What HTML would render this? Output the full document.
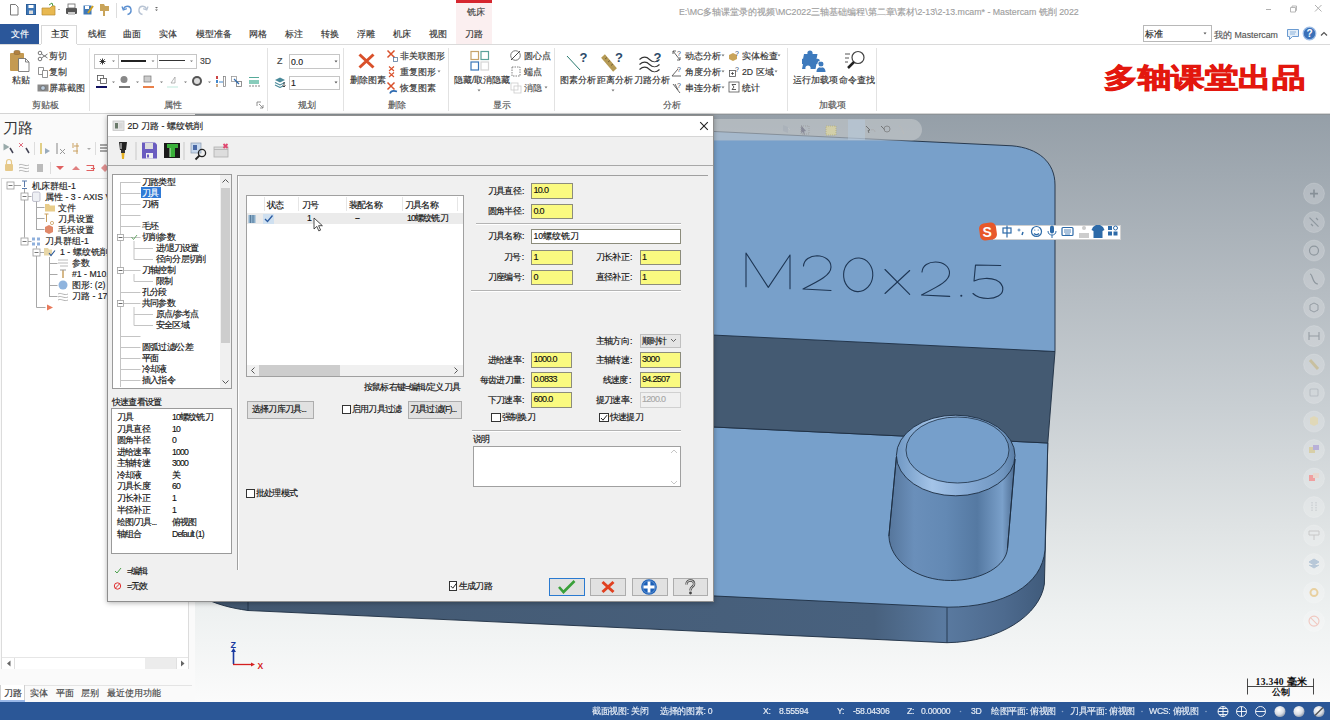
<!DOCTYPE html>
<html><head><meta charset="utf-8">
<style>
*{box-sizing:border-box;margin:0;padding:0}
html,body{width:1330px;height:720px;overflow:hidden;background:#fff;font-family:"Liberation Sans",sans-serif;color:#222}
.a{position:absolute;white-space:nowrap}
.t{position:absolute;white-space:nowrap;font-size:8.7px;line-height:10px;color:#333;-webkit-text-stroke:0.15px currentColor}
#vp{position:absolute;left:193px;top:114px;width:1137px;height:588px;background:linear-gradient(180deg,#959fa8 0%,#b5bcc2 30%,#c9cfd3 50%,#dfe3e4 70%,#eef1f1 85%,#fbfbfb 100%);border-top:1px solid #8d9499}
#status{position:absolute;left:0;top:702px;width:1330px;height:18px;background:#2b5797;color:#fff}
#status .t{color:#e8eef6;top:4px;letter-spacing:-0.3px}
.inp{background:#fafa80;border:1px solid #8c8c7c;font-size:9px;line-height:12.5px;color:#111;padding-left:1.5px;letter-spacing:-0.7px;overflow:hidden;-webkit-text-stroke:0.15px currentColor}
.inp span{position:relative;top:0}
.dlg .t{letter-spacing:-0.8px}
</style></head><body>
<!-- viewport -->
<div id="vp"></div>


<!-- 3D PART -->
<svg class="a" style="left:0;top:0" width="1330" height="720" viewBox="0 0 1330 720">
 <defs>
  <clipPath id="vpc"><rect x="193" y="115" width="1137" height="587"/></clipPath>
  <linearGradient id="cyl" x1="0" y1="0" x2="1" y2="0">
   <stop offset="0" stop-color="#56769c"/><stop offset="0.2" stop-color="#6a8fba"/><stop offset="0.45" stop-color="#6389b4"/><stop offset="0.7" stop-color="#5579a2"/><stop offset="0.9" stop-color="#7aa0ca"/><stop offset="1" stop-color="#4c6b90"/>
  </linearGradient>
  <linearGradient id="cham" x1="0" y1="0" x2="1" y2="0">
   <stop offset="0" stop-color="#7098c4"/><stop offset="0.3" stop-color="#a4c4e8"/><stop offset="0.6" stop-color="#86aad4"/><stop offset="0.9" stop-color="#7096c0"/><stop offset="1" stop-color="#5a7ea6"/>
  </linearGradient>
  <linearGradient id="front" x1="0" y1="0" x2="1" y2="0">
   <stop offset="0" stop-color="#435870"/><stop offset="0.8" stop-color="#48617e"/><stop offset="0.88" stop-color="#5a7aa0"/><stop offset="0.95" stop-color="#4d6a8e"/><stop offset="1" stop-color="#3f5a7a"/>
  </linearGradient>
 </defs>
 <g clip-path="url(#vpc)" stroke="#1d2e42" stroke-width="0.9" stroke-linejoin="round">
  <!-- front face -->
  <path d="M180 540 L1047.8 443 L1044.4 584 C1040 615 1000 642 947 642.7 L248 610.5 C230 608 215 604 200 596 Z" fill="url(#front)"/>
  <path d="M947 607 V642.7" fill="none" stroke-width="0.8"/>
  <path d="M248 574 V610.5" fill="none" stroke-width="0.8"/>
  <!-- lower face -->
  <path d="M150 400 L1047.8 443 L1045 550 C1042 585 1005 607 948 607.2 L248 573.6 C230 572 200 565 180 550 Z" fill="#77a0cb"/>
  <!-- dark step face -->
  <path d="M150 300 L1055 351.5 L1047.8 443 L150 400 Z" fill="#445a72"/>
  <!-- top face -->
  <path d="M150 104.4 L1012 145.8 C1038 148 1055 162 1055 185 L1055 351.5 L150 308 Z" fill="#78a0ca"/>
  <!-- cylinder -->
  <path d="M896.4 457 L888.9 536 C890 562 918 580.5 950.5 580.5 C982 580.5 1006 566 1007.5 548.6 L1015 459 Z" fill="url(#cyl)"/>
  <ellipse cx="955.7" cy="455.5" rx="59.3" ry="40.3" fill="url(#cham)"/>
  <ellipse cx="957.5" cy="450" rx="51.5" ry="33" fill="#769fcb" stroke-width="0.8"/>
  <path d="M896.4 457 L888.9 536 M1015 459 L1007.5 548.6" fill="none"/>
  <!-- M20x2.5 -->
  <g fill="none" stroke="#1e3654" stroke-width="1.1" stroke-linecap="round">
   <path d="M746 286.7 L746 253 L768.3 287.4 L790 255 L790 288.8"/>
   <path d="M803.5 266 C804 259.5 810 255.8 817 255.8 C825 256 831 260.5 831 267 C831 275 820 280.5 803 289 L831 290.5"/>
   <ellipse cx="858.2" cy="274.8" rx="14.6" ry="16.8" transform="rotate(3 858.2 274.8)"/>
   <path d="M885 269.5 L909.7 294.3 M909.7 270.5 L885 293.5"/>
   <path d="M922 272 C922.5 265.5 928.5 262 935.5 262 C943.5 262 949.5 266.5 949.5 273 C949.5 281 939 286 921.5 295 L949.7 296.4"/>
   <circle cx="961.3" cy="295.8" r="0.5"/>
   <path d="M1000.7 265.5 L975.5 265 L974 281 C980 278 990 277.5 996 280 C1001 282.5 1003 286 1002.8 289.5 C1002.5 295 996 298.5 988 298.5 C981 298.5 976 296.5 973 293.5"/>
  </g>
 </g>
 <!-- viewport top toolbar (translucent) -->
 <rect x="195" y="119" width="727" height="21.5" rx="10.7" fill="#c4c9cd" fill-opacity="0.6"/>
 <rect x="848" y="119.5" width="17" height="20.5" fill="#b8cce0" fill-opacity="0.5"/>
 <g fill="none" stroke-width="1" opacity="0.7">
  <path d="M787 127l3 3M804 126v6" stroke="#c0c4c8"/>
  <path d="M783 125l5 2v6l-5-2z" fill="#a8b0b8" stroke="none"/>
  <path d="M801 125l5 6-2 .5 1 3-1 .5-1-3-2 1z" fill="#778" stroke="none"/>
  <rect x="801" y="126" width="8" height="8" stroke="#999" stroke-dasharray="1 1"/>
  <rect x="826" y="126" width="10" height="9" fill="#e0d8a0" stroke="#b8b070" stroke-dasharray="1 1"/>
  <path d="M866 126l4 4-2 .5 1 2.5" stroke="#555"/><path d="M871 130c2-1 4 0 4 2" stroke="#aaa"/>
  <path d="M881 126l4 4" stroke="#555"/><circle cx="887" cy="129" r="3" stroke="#777"/>
  <path d="M899 126c2 0 3 2 3 4l2 4" stroke="#bbb"/>
 </g>
 <!-- right circles -->
 <g fill="#ffffff" fill-opacity="0.2" stroke="#ffffff" stroke-opacity="0.15" stroke-width="1"><circle cx="1314" cy="193.6" r="10.5"/><circle cx="1314" cy="222.1" r="10.5"/><circle cx="1314" cy="250.6" r="10.5"/><circle cx="1314" cy="279.1" r="10.5"/><circle cx="1314" cy="307.6" r="10.5"/><circle cx="1314" cy="336.1" r="10.5"/><circle cx="1314" cy="364.6" r="10.5"/><circle cx="1314" cy="393.1" r="10.5"/><circle cx="1314" cy="421.6" r="10.5"/><circle cx="1314" cy="450.1" r="10.5"/><circle cx="1314" cy="478.6" r="10.5"/><circle cx="1314" cy="507.1" r="10.5"/><circle cx="1314" cy="535.6" r="10.5"/><circle cx="1314" cy="564.1" r="10.5"/><circle cx="1314" cy="592.6" r="10.5"/><circle cx="1314" cy="621.1" r="10.5"/></g>
 <path d="M1310 193.6h8M1314 189.6v8" stroke="#868f97" stroke-width="1.6"/>
 <path d="M1309.5 217.6l9 9M1311 224l2 2M1316 218l2 2" stroke="#8e979e" stroke-width="1.2"/>
 <circle cx="1314" cy="250.6" r="4.5" fill="none" stroke="#8e979e" stroke-width="1.2"/>
 <path d="M1310 274c3 0 2 10 8 10" fill="none" stroke="#8e979e" stroke-width="1.2"/>
 <path d="M1310 305l4-2 4 2v5l-4 2-4-2z" fill="none" stroke="#959da4" stroke-width="1"/>
 <path d="M1309 332v8M1319 332v8M1309 336h10" stroke="#959da4" stroke-width="1.1"/>
 <path d="M1310 360l8 9" stroke="#c8c0a0" stroke-width="3"/>
 <rect x="1310" y="389" width="8" height="7" rx="1" fill="none" stroke="#b8bec4" stroke-width="1.1"/>
 <path d="M1310 418l4-2 4 2v6l-4 2-4-2z" fill="#e0d8b8"/>
 <rect x="1309" y="447" width="6" height="6" fill="#d8cfa8"/><rect x="1313" y="445" width="6" height="5" fill="#b8b0d8"/>
 <rect x="1309" y="475" width="6" height="6" fill="#f0a0a0"/><rect x="1313" y="473" width="6" height="5" fill="#e8d8d0"/>
 <path d="M1312 502v10M1316 502v10" stroke="#c4c8cc" stroke-width="1" stroke-dasharray="1.5 1"/>
 <path d="M1309 531h10v4h-10zM1314 535v5" fill="none" stroke="#c8c8c8" stroke-width="1"/>
 <path d="M1309 562l5-3 5 3-5 3zM1309 565l5 3 5-3" fill="#b8c8d8" stroke="#b8c8d8" stroke-width="1"/>
 <circle cx="1314" cy="592.6" r="3.5" fill="none" stroke="#e8d0a0" stroke-width="2"/>
 <circle cx="1314" cy="621.1" r="5" fill="none" stroke="#f0c8c0" stroke-width="1.1"/><path d="M1310.5 617.6l7 7" stroke="#f0c8c0" stroke-width="1.1"/>
 <!-- axis -->
 <path d="M233.5 664 V650" stroke="#1a3aa0" stroke-width="1.6"/><path d="M231 652l2.5-4 2.5 4z" fill="#1a3aa0"/>
 <path d="M233 664.5 H252" stroke="#d42020" stroke-width="1.3"/><path d="M251 662.5l4 2-4 2z" fill="#d42020"/>
 <text x="230.5" y="648" font-size="9" font-weight="bold" fill="#1a3aa0" font-family="Liberation Sans">Z</text>
 <text x="257.5" y="669" font-size="8.5" font-weight="bold" fill="#d42020" font-family="Liberation Sans">X</text>
 <!-- scale bar -->
 <path d="M1247.5 678.5 V694.5 M1313.5 678.5 V694.5 M1247.5 686.5 H1313.5" stroke="#333" stroke-width="0.9"/>
</svg>
<div class="a" style="left:1255.5px;top:676.5px;font-family:'Liberation Serif',serif;font-size:9.6px;line-height:10px;font-weight:bold;color:#111;letter-spacing:0.35px">13.340 毫米</div>
<div class="a" style="left:1272px;top:687px;font-family:'Liberation Serif',serif;font-size:8.5px;line-height:10px;font-weight:bold;color:#111">公制</div>
<!-- IME bar -->
<div class="a" style="left:993px;top:225px;width:128px;height:15px;background:#fff;border:1px solid #d0d0d0"></div>
<svg class="a" style="left:978px;top:222px" width="145" height="20">
 <rect x="1.5" y="1" width="17" height="17" rx="5" fill="#e8582a" transform="rotate(-8 10 9.5)"/>
 <text x="4.5" y="15" font-size="14" font-weight="bold" fill="#fff" font-family="Liberation Sans">S</text>
 <g fill="none" stroke="#2d6aa8" stroke-width="1.2">
  <rect x="25" y="6" width="8" height="5"/><path d="M29 3.5v12"/>
  <circle cx="58.5" cy="9.5" r="5"/><path d="M56 11.5c1.5 1.5 3.5 1.5 5 0"/>
   </g>
 <circle cx="41" cy="8" r="1" fill="none" stroke="#2d6aa8" stroke-width="0.8"/><path d="M45 10l-1 3" stroke="#2d6aa8" stroke-width="1.5"/>
 <circle cx="56.8" cy="8" r="0.6" fill="#2d6aa8"/><circle cx="60.2" cy="8" r="0.6" fill="#2d6aa8"/>
 <rect x="72" y="3.5" width="4" height="8" rx="2" fill="#2d6aa8"/><path d="M70 9c0 3 2 4 4 4s4-1 4-4M74 13v3" fill="none" stroke="#2d6aa8" stroke-width="1"/>
 <rect x="84" y="5.5" width="11" height="8" rx="1" fill="none" stroke="#2d6aa8" stroke-width="1.2"/><path d="M86 8h7M86 10h7M87 12h5" stroke="#2d6aa8" stroke-width="0.8"/>
 <circle cx="106" cy="6" r="2" fill="#ccc"/><path d="M101 16v-5h10v5z" fill="#ccc"/>
 <path d="M115 5l3-2h4l3 2 1.5 3-2 1v7h-9v-7l-2-1z" fill="#2d6aa8"/>
 <rect x="130" y="4" width="4" height="4" fill="#2d6aa8"/><rect x="130" y="9.5" width="4" height="4" fill="#2d6aa8"/><rect x="135.5" y="9.5" width="4" height="4" fill="#2d6aa8"/><circle cx="137.5" cy="6" r="2" fill="none" stroke="#2d6aa8" stroke-width="1"/>
</svg>

<!-- title / QAT -->
<div class="a" style="left:0;top:0;width:1330px;height:45px;background:#fff"></div>
<div class="a" style="left:456px;top:0;width:36px;height:44px;background:#fbeff0"></div>
<div class="a" style="left:456px;top:0;width:36px;height:3px;background:#d6262f"></div>
<div class="t" style="left:467px;top:7px;color:#444">铣床</div>
<div class="t" style="left:679px;top:7px;color:#a0a0a0;font-size:8.8px">E:\MC多轴课堂录的视频\MC2022三轴基础编程\第二章\素材\2-13\2-13.mcam* - Mastercam 铣削 2022</div>

<!-- tabs -->
<div class="a" style="left:0;top:24px;width:39px;height:20px;background:#2b579a"></div>
<div class="t" style="left:11px;top:29px;color:#fff">文件</div>
<div class="a" style="left:41px;top:25px;width:36px;height:21px;border:1px solid #d8d8d8;border-bottom:none;background:#fff"></div>
<div class="a" style="left:0;top:44px;width:1330px;height:1px;background:#dadada"></div>
<div class="a" style="left:41px;top:44px;width:36px;height:1px;background:#fff"></div>
<div class="t" style="left:51px;top:29px;color:#222">主页</div>
<div class="t" style="left:88px;top:29px">线框</div>
<div class="t" style="left:123px;top:29px">曲面</div>
<div class="t" style="left:159px;top:29px">实体</div>
<div class="t" style="left:196px;top:29px">模型准备</div>
<div class="t" style="left:249px;top:29px">网格</div>
<div class="t" style="left:285px;top:29px">标注</div>
<div class="t" style="left:321px;top:29px">转换</div>
<div class="t" style="left:357px;top:29px">浮雕</div>
<div class="t" style="left:393px;top:29px">机床</div>
<div class="t" style="left:429px;top:29px">视图</div>
<div class="t" style="left:465px;top:29px">刀路</div>

<!-- ribbon body -->
<div class="a" style="left:0;top:45px;width:1330px;height:69px;background:#fff;border-bottom:1px solid #d4d4d4"></div>


<!-- QAT icons -->
<svg class="a" style="left:0;top:0" width="180" height="22" viewBox="0 0 180 22">
 <path d="M10.5 4.5h5l2.5 2.5v8h-7.5z" fill="#fff" stroke="#6a6a6a" stroke-width="0.9"/>
 <rect x="26.5" y="4.5" width="9" height="10" fill="#3f78b8" stroke="#2d5f99"/><rect x="28.5" y="5" width="5" height="3" fill="#fff"/><rect x="29" y="10.5" width="4" height="3.5" fill="#ddd"/>
 <path d="M42 8h8l2-2h3v9h-13z" fill="#e8b850" stroke="#b8892e" stroke-width="0.7"/><path d="M49 5l3-2 1 3" stroke="#4a9a40" fill="none"/>
 <path d="M58 9l1 1 1-1z" fill="#555"/>
 <rect x="66" y="8" width="11" height="6" rx="1" fill="#555"/><rect x="68" y="4" width="7" height="4" fill="#fff" stroke="#666" stroke-width="0.8"/><rect x="68" y="12" width="7" height="3" fill="#ccc"/>
 <rect x="83.5" y="5.5" width="8" height="9" fill="#3f78b8"/><rect x="85" y="6" width="4" height="3" fill="#fff"/><path d="M88 13l5-7" stroke="#d0a020" stroke-width="2"/>
 <path d="M100 4h4l1 2h4v5h-4v5h-2v-5h-3z" fill="#c9a45a"/>
 <rect x="116" y="3" width="1" height="15" fill="#ddd"/>
 <path d="M123.5 9c1.5-3.5 7-4 7.5 0.5c0.3 2.5-1.5 4.5-3.5 5" fill="none" stroke="#5b8fd0" stroke-width="1.4"/><path d="M122 6.5l1.3 3.5 3.5-1.3" fill="none" stroke="#5b8fd0" stroke-width="1.3"/>
 <path d="M146.5 9c-1.5-3.5-7-4-7.5 0.5c-0.3 2.5 1.5 4.5 3.5 5" fill="none" stroke="#b8c4d4" stroke-width="1.4"/><path d="M148 6.5l-1.3 3.5-3.5-1.3" fill="none" stroke="#b8c4d4" stroke-width="1.3"/>
 <path d="M155 7h3l-1.5 1.5z M155 9.5h3l-1.5 1.5z" fill="#666"/>
</svg>
<!-- window controls -->
<div class="a" style="left:1266px;top:9px;width:5px;height:1px;background:#b0b0b0"></div>
<svg class="a" style="left:1288px;top:4px" width="10" height="10"><path d="M2.5 3.5h5v4.5h-5z M4 3.5v-1.5h4.5v4.5h-1" fill="none" stroke="#b0b0b0" stroke-width="0.9"/></svg>
<svg class="a" style="left:1313px;top:3px" width="11" height="11"><path d="M2 2l6.5 6.5M8.5 2l-6.5 6.5" stroke="#b0b0b0" stroke-width="1"/></svg>
<!-- right of tab bar -->
<div class="a" style="left:1143px;top:25px;width:69px;height:17px;border:1px solid #b8b8b8;background:#fff"></div>
<div class="t" style="left:1145px;top:29px;color:#222">标准</div>
<svg class="a" style="left:1203px;top:32px" width="5" height="4"><path d="M0.5 0.5h3l-1.5 2z" fill="#555"/></svg>
<div class="t" style="left:1214px;top:30px;color:#555;font-size:8.8px">我的 Mastercam</div>
<svg class="a" style="left:1286px;top:27px" width="14" height="14"><path d="M1.5 2.5h11v7h-6l-3 3v-3h-2z" fill="#e4eef8" stroke="#6b9bd1" stroke-width="1"/><path d="M4 5h6M4 7h5" stroke="#6b9bd1" stroke-width="0.7"/></svg>
<svg class="a" style="left:1302px;top:26px" width="15" height="15"><circle cx="7.5" cy="7.5" r="6.3" fill="#3a70b8" stroke="#9bbce6" stroke-width="1.2"/><text x="7.5" y="11.2" font-size="10" font-weight="bold" fill="#fff" text-anchor="middle" font-family="Liberation Sans">?</text></svg>
<svg class="a" style="left:1320px;top:31px" width="8" height="6"><path d="M1 4.5l3-3 3 3" fill="none" stroke="#555" stroke-width="1.2"/></svg>

<!-- group dividers -->
<div class="a" style="left:89px;top:48px;width:1px;height:63px;background:#e2e2e2"></div>
<div class="a" style="left:267px;top:48px;width:1px;height:63px;background:#e2e2e2"></div>
<div class="a" style="left:343px;top:48px;width:1px;height:63px;background:#e2e2e2"></div>
<div class="a" style="left:448px;top:48px;width:1px;height:63px;background:#e2e2e2"></div>
<div class="a" style="left:554px;top:48px;width:1px;height:63px;background:#e2e2e2"></div>
<div class="a" style="left:787px;top:48px;width:1px;height:63px;background:#e2e2e2"></div>
<div class="a" style="left:876px;top:48px;width:1px;height:63px;background:#e2e2e2"></div>
<!-- group labels -->
<div class="t" style="left:32px;top:100px;color:#555">剪贴板</div>
<div class="t" style="left:164px;top:100px;color:#555">属性</div>
<div class="t" style="left:298px;top:100px;color:#555">规划</div>
<div class="t" style="left:388px;top:100px;color:#555">删除</div>
<div class="t" style="left:493px;top:100px;color:#555">显示</div>
<div class="t" style="left:663px;top:100px;color:#555">分析</div>
<div class="t" style="left:819px;top:100px;color:#555">加载项</div>
<svg class="a" style="left:256px;top:101px" width="8" height="8"><path d="M1 1h4M1 1v4M3 3l4 4M7 4v3h-3" fill="none" stroke="#777" stroke-width="0.8"/></svg>

<!-- 剪贴板 -->
<svg class="a" style="left:8px;top:48px" width="26" height="28">
 <rect x="2" y="5" width="14" height="18" rx="1" fill="#c49a52"/>
 <rect x="6" y="2.5" width="6" height="4" rx="1.5" fill="#b08040" stroke="#8a6a3a" stroke-width="0.6"/>
 <path d="M10.5 10.5h7l3.5 3.5v9.5h-10.5z" fill="#fff" stroke="#666" stroke-width="0.8"/>
 <path d="M17.5 10.5v3.5h3.5" fill="none" stroke="#666" stroke-width="0.8"/>
</svg>
<div class="t" style="left:12px;top:75px">粘贴</div>
<svg class="a" style="left:37px;top:50px" width="12" height="12"><circle cx="3" cy="3" r="1.8" fill="none" stroke="#666" stroke-width="0.9"/><circle cx="3" cy="9" r="1.8" fill="none" stroke="#666" stroke-width="0.9"/><path d="M4.5 4l6 4M4.5 8l6-4" stroke="#666" stroke-width="0.9"/></svg>
<div class="t" style="left:49px;top:51px">剪切</div>
<svg class="a" style="left:37px;top:66px" width="12" height="12"><path d="M1.5 1.5h5v7h-5z" fill="#fff" stroke="#777" stroke-width="0.8"/><path d="M5.5 4.5h5v7h-5z" fill="#fff" stroke="#777" stroke-width="0.8"/></svg>
<div class="t" style="left:49px;top:67px">复制</div>
<svg class="a" style="left:37px;top:83px" width="12" height="10"><rect x="0.5" y="1.5" width="11" height="7" fill="#8a8a8a"/><circle cx="6" cy="5" r="2.3" fill="#bcd" stroke="#555" stroke-width="0.6"/></svg>
<div class="t" style="left:49px;top:83px">屏幕截图</div>

<!-- 属性 -->
<div class="a" style="left:94px;top:54px;width:103px;height:15px;border:1px solid #c6c6c6;background:#fff"></div>
<div class="a" style="left:118px;top:55px;width:1px;height:13px;background:#c6c6c6"></div>
<div class="a" style="left:157px;top:55px;width:1px;height:13px;background:#c6c6c6"></div>
<svg class="a" style="left:94px;top:54px" width="103" height="15">
 <path d="M5.5 7.5h6M8.5 4.5v6M6.3 5.3l4.4 4.4M10.7 5.3l-4.4 4.4" stroke="#222" stroke-width="0.9"/>
 <path d="M18 6.5h3l-1.5 1.5z M57.5 6.5h3l-1.5 1.5z M96 6.5h3l-1.5 1.5z" fill="#777"/>
 <rect x="27" y="6" width="25" height="2" fill="#222"/>
 <rect x="65" y="6" width="26" height="1" fill="#333"/>
</svg>
<div class="t" style="left:200px;top:56px;color:#444">3D</div>
<svg class="a" style="left:95px;top:74px" width="170" height="16">
 <rect x="2.5" y="1.5" width="6" height="5" fill="#fff" stroke="#555" stroke-width="0.8"/><rect x="5.5" y="4.5" width="6" height="5" fill="#fff" stroke="#555" stroke-width="0.8"/>
 <rect x="1" y="12" width="11" height="2" fill="#101060"/>
 <path d="M17 7.5h3l-1.5 1.5z M41 7.5h3l-1.5 1.5z M65 7.5h3l-1.5 1.5z M89 7.5h3l-1.5 1.5z M113 7.5h3l-1.5 1.5z" fill="#777"/>
 <circle cx="29" cy="5.5" r="3.5" fill="#888"/><rect x="24" y="12" width="11" height="2" fill="#777"/>
 <rect x="49" y="2" width="7" height="6" fill="#ccc" stroke="#777" stroke-width="0.7"/><rect x="48" y="12" width="11" height="2" fill="#e9804a"/>
 <path d="M76 9l4-6v6z" fill="none" stroke="#999" stroke-width="0.7"/><rect x="72" y="12" width="11" height="2" fill="#dff4ee"/>
 <circle cx="102" cy="7" r="5" fill="#555"/><circle cx="102" cy="7" r="3" fill="#ddd"/>
 <rect x="121" y="2" width="2" height="3" fill="#c44"/><rect x="121" y="6" width="2" height="3" fill="#48c"/><rect x="121" y="10" width="2" height="3" fill="#ca8"/>
 <path d="M124 8h4" stroke="#48c" stroke-width="1"/><rect x="128.5" y="2.5" width="2" height="10" fill="none" stroke="#777" stroke-width="0.7"/>
 <rect x="136.5" y="2.5" width="5" height="5" fill="none" stroke="#999" stroke-width="0.8"/><rect x="141.5" y="7.5" width="5" height="5" fill="none" stroke="#777" stroke-width="0.8"/><path d="M139 5l5 5" stroke="#2d6ab0" stroke-width="1.2"/>
 <rect x="154" y="3" width="10" height="1" fill="#5a9"/><rect x="154" y="6" width="10" height="4" fill="#8cb"/><path d="M155 11v2M158 11v2M161 11v2M164 11v2" stroke="#666" stroke-width="0.8"/>
</svg>

<!-- 规划 -->
<div class="t" style="left:277px;top:56px;color:#444;font-size:9px">Z</div>
<div class="a" style="left:289px;top:54px;width:51px;height:15px;border:1px solid #c6c6c6;background:#fff"></div>
<div class="t" style="left:291px;top:57px;color:#222">0.0</div>
<div class="a" style="left:289px;top:76px;width:51px;height:14px;border:1px solid #c6c6c6;background:#fff"></div>
<div class="t" style="left:291px;top:78px;color:#222">1</div>
<svg class="a" style="left:334px;top:60px" width="5" height="4"><path d="M0.5 0.5h3l-1.5 2z" fill="#555"/></svg>
<svg class="a" style="left:334px;top:81px" width="5" height="4"><path d="M0.5 0.5h3l-1.5 2z" fill="#555"/></svg>
<svg class="a" style="left:274px;top:76px" width="12" height="12"><path d="M1 4l5-2.5 5 2.5-5 2.5z" fill="#4a8a9a"/><path d="M1 6.5l5 2.5 5-2.5M1 9l5 2.5 3-1.5" fill="none" stroke="#4a8a9a" stroke-width="1.1"/><path d="M10 6v5M8.5 9.5l1.5 1.5 1.5-1.5" stroke="#333" stroke-width="0.9" fill="none"/></svg>

<!-- 删除 -->
<svg class="a" style="left:357px;top:52px" width="19" height="18"><path d="M2.5 2.5l14 13M16.5 2.5l-14 13" stroke="#d9502a" stroke-width="3"/></svg>
<div class="t" style="left:350px;top:75px">删除图素</div>
<svg class="a" style="left:386px;top:49px" width="14" height="14"><path d="M1.5 1.5l7 7M8.5 1.5l-7 7" stroke="#d9502a" stroke-width="1.5"/><rect x="7.5" y="8.5" width="4" height="4" fill="none" stroke="#5a7aa0" stroke-width="0.8"/></svg>
<div class="t" style="left:400px;top:51px">非关联图形</div>
<svg class="a" style="left:387px;top:65px" width="12" height="14"><path d="M2 1.5l5 4.5M7 1.5l-5 4.5M2 7.5l5 4.5M7 7.5l-5 4.5" stroke="#d9502a" stroke-width="1.1"/></svg>
<div class="t" style="left:400px;top:67px">重复图形</div>
<svg class="a" style="left:437px;top:70px" width="5" height="4"><path d="M0.5 0.5h3l-1.5 2z" fill="#777"/></svg>
<svg class="a" style="left:386px;top:81px" width="14" height="14"><path d="M1.5 1.5l7 7M8.5 1.5l-7 7" stroke="#d9502a" stroke-width="1.5"/><path d="M4 12.5c1-3 4-3 7-2" fill="none" stroke="#2d6ab0" stroke-width="1.6"/></svg>
<div class="t" style="left:400px;top:83px">恢复图素</div>

<!-- 显示 -->
<svg class="a" style="left:469px;top:50px" width="22" height="22">
 <rect x="2" y="1.5" width="7.5" height="8" fill="none" stroke="#c6a36a" stroke-width="1.2"/>
 <rect x="12" y="1.5" width="7.5" height="8" fill="none" stroke="#5aa19a" stroke-width="1.2"/>
 <rect x="2" y="12" width="7.5" height="8" fill="none" stroke="#3a76b8" stroke-width="1.2"/>
 <rect x="12" y="12" width="7.5" height="8" fill="none" stroke="#d6d6d6" stroke-width="1.2"/>
</svg>
<div class="t" style="left:454px;top:75px">隐藏/取消隐藏</div>
<svg class="a" style="left:477px;top:89px" width="5" height="4"><path d="M0.5 0.5h3l-1.5 2z" fill="#777"/></svg>
<svg class="a" style="left:509px;top:49px" width="13" height="13"><circle cx="6.5" cy="6.5" r="4.8" fill="none" stroke="#666" stroke-width="0.9"/><path d="M2 11l9-9" stroke="#333" stroke-width="0.9"/></svg>
<div class="t" style="left:524px;top:51px">圆心点</div>
<svg class="a" style="left:511px;top:66px" width="10" height="11"><rect x="1" y="1" width="8" height="9" fill="none" stroke="#777" stroke-width="0.9" stroke-dasharray="1.5 1"/></svg>
<div class="t" style="left:524px;top:67px">端点</div>
<svg class="a" style="left:510px;top:82px" width="12" height="12"><rect x="1" y="1" width="7" height="7" fill="none" stroke="#ccc" stroke-width="0.8"/><rect x="4" y="4" width="7" height="7" fill="none" stroke="#ccc" stroke-width="0.8"/></svg>
<div class="t" style="left:524px;top:83px;color:#555">消隐</div>
<svg class="a" style="left:544px;top:86px" width="5" height="4"><path d="M0.5 0.5h3l-1.5 2z" fill="#777"/></svg>

<!-- 分析 -->
<svg class="a" style="left:565px;top:50px" width="24" height="22"><path d="M2 6l13 14" stroke="#2a7a70" stroke-width="1"/><text x="14.5" y="12" font-size="13" font-weight="bold" fill="#2d4a6a" font-family="Liberation Sans">?</text></svg>
<div class="t" style="left:560px;top:75px">图素分析</div>
<svg class="a" style="left:600px;top:50px" width="26" height="22"><path d="M3 6l12 14" stroke="#b59a55" stroke-width="5"/><path d="M5 9l2-1.5M8 12l2-1.5M11 15.5l2-1.5" stroke="#6a5530" stroke-width="0.8"/><text x="15" y="12" font-size="13" font-weight="bold" fill="#2d4a6a" font-family="Liberation Sans">?</text></svg>
<div class="t" style="left:597px;top:75px">距离分析</div>
<svg class="a" style="left:611px;top:89px" width="5" height="4"><path d="M0.5 0.5h3l-1.5 2z" fill="#777"/></svg>
<svg class="a" style="left:638px;top:50px" width="26" height="24"><path d="M1.5 9.5c3.5-3 7-3 10 0s7 3 10 0M1.5 14.5c3.5-3 7-3 10 0s7 3 10 0M1.5 19.5c3.5-3 7-3 10 0s7 3 10 0" fill="none" stroke="#333" stroke-width="1.1"/><text x="15.5" y="11.5" font-size="13" font-weight="bold" fill="#2d4a6a" font-family="Liberation Sans">?</text></svg>
<div class="t" style="left:634px;top:75px">刀路分析</div>
<svg class="a" style="left:671px;top:49px" width="12" height="13"><path d="M2 2l7 9" stroke="#555" stroke-width="0.9"/><path d="M2 2h3M2 2v3M9 11h-3M9 11v-3" stroke="#555" stroke-width="0.9"/><text x="6" y="7" font-size="7" fill="#2d4a6a" font-family="Liberation Sans">?</text></svg>
<div class="t" style="left:685px;top:51px">动态分析</div>
<svg class="a" style="left:671px;top:65px" width="12" height="13"><path d="M1 11h9M1 11l6-7" fill="none" stroke="#555" stroke-width="0.9"/><text x="6" y="7" font-size="7" fill="#2d4a6a" font-family="Liberation Sans">?</text></svg>
<div class="t" style="left:685px;top:67px">角度分析</div>
<svg class="a" style="left:671px;top:81px" width="12" height="13"><path d="M2 3l7 9M4 3l3 6" fill="none" stroke="#555" stroke-width="0.9"/><text x="6" y="7" font-size="7" fill="#2d4a6a" font-family="Liberation Sans">?</text></svg>
<div class="t" style="left:685px;top:83px">串连分析</div>
<svg class="a" style="left:721px;top:54px" width="5" height="36"><path d="M0.5 0.5h3l-1.5 2z M0.5 16.5h3l-1.5 2z M0.5 32.5h3l-1.5 2z" fill="#777"/></svg>
<svg class="a" style="left:728px;top:49px" width="13" height="13"><path d="M1 6l4-2 4 2v4l-4 2-4-2z" fill="#c9a45a"/><text x="7" y="7" font-size="7" fill="#2d4a6a" font-family="Liberation Sans">?</text></svg>
<div class="t" style="left:742px;top:51px">实体检查</div>
<svg class="a" style="left:728px;top:65px" width="13" height="13"><rect x="1.5" y="5.5" width="6" height="6" fill="none" stroke="#555" stroke-width="0.8"/><path d="M4.5 7v3M3 8.5h3" stroke="#333" stroke-width="0.7"/><text x="7" y="7" font-size="7" fill="#2d4a6a" font-family="Liberation Sans">?</text></svg>
<div class="t" style="left:742px;top:67px">2D 区域</div>
<svg class="a" style="left:728px;top:81px" width="12" height="12"><rect x="1" y="1" width="10" height="10" fill="none" stroke="#555" stroke-width="0.8"/><path d="M8 3.5h-4l2 2.5-2 2.5h4" fill="none" stroke="#333" stroke-width="0.8"/></svg>
<div class="t" style="left:742px;top:83px">统计</div>
<svg class="a" style="left:777px;top:54px" width="5" height="4"><path d="M0.5 0.5h3l-1.5 2z" fill="#777"/></svg>
<svg class="a" style="left:774px;top:70px" width="5" height="4"><path d="M0.5 0.5h3l-1.5 2z" fill="#777"/></svg>

<!-- 加载项 -->
<svg class="a" style="left:802px;top:49px" width="24" height="24"><g fill="#3d7abd"><path d="M8 1.5c2 0 3 1.5 2.5 3.5h5l-1 5c2-0.5 3.5 0.5 3.5 2.5s-1.5 3-3.5 2.5l-1 5h-5c0.5-2-0.5-3.5-2.5-3.5s-3 1.5-2.5 3.5h-3.5l1-5c-2 0.5-3-0.5-3-2.5s1-3 3-2.5l1-5h3.5c-0.5-2 0.5-3.5 2.5-3.5z"/><circle cx="19" cy="15" r="2.6"/><path d="M14.5 23c0-3.5 2-5 4.5-5s4.5 1.5 4.5 5z"/></g><circle cx="19" cy="15" r="3.3" fill="none" stroke="#fff" stroke-width="0.9"/></svg>
<div class="t" style="left:793px;top:75px">运行加载项</div>
<svg class="a" style="left:843px;top:49px" width="24" height="24"><circle cx="15" cy="8.5" r="6" fill="none" stroke="#444" stroke-width="1.2"/><path d="M11 13l-6 6" stroke="#222" stroke-width="2.5"/><path d="M2 5h5M2 9h4M2 13h3" stroke="#555" stroke-width="1"/></svg>
<div class="t" style="left:839px;top:75px">命令查找</div>

<!-- watermark -->
<div class="a" style="left:1104px;top:58px;font-size:29px;line-height:36px;font-weight:900;color:#e3170e;-webkit-text-stroke:1px #e3170e;letter-spacing:0.2px;transform-origin:0 100%;transform:scale(1.15,0.93)">多轴课堂出品</div>


<!-- LEFT PANEL -->
<div class="a" style="left:0;top:114px;width:195px;height:588px;background:#fafafa"></div>
<div class="a" style="left:3px;top:119px;font-size:15px;line-height:18px;color:#333">刀路</div>
<svg class="a" style="left:0;top:140px" width="110" height="36">
 <path d="M3.5 3.5l6 3.5-6 3.5z" fill="#9aa"/><path d="M10 8l3 5" stroke="#445" stroke-width="1.5"/>
 <path d="M19 3l4 4M23 3l-4 4" stroke="#e07080" stroke-width="1"/><path d="M26 8l3 5" stroke="#445" stroke-width="1.5"/>
 <rect x="34" y="2" width="1" height="13" fill="#ddd"/>
 <path d="M41 3v11" stroke="#d9c060" stroke-width="1.5"/><path d="M45 8l5 3-5 3z" fill="#9ab"/>
 <path d="M57 3v11" stroke="#999" stroke-width="1.2"/><path d="M60 9l5 5M65 9l-5 5" stroke="#999" stroke-width="1"/>
 <path d="M73 3v5M77 3v11M73 11h5M74 6h5" stroke="#c9a060" stroke-width="1"/>
 <path d="M87 8l2 2 2-2z" fill="#aaa"/>
 <rect x="95" y="2" width="1" height="13" fill="#ddd"/>
 <path d="M100 5h10M100 8h10M100 11h10" stroke="#888" stroke-width="1.3"/>
 <rect x="5" y="24" width="8" height="7" rx="1" fill="#e6c98a"/><path d="M6.5 24v-2a2.5 2.5 0 0 1 5 0v2" fill="none" stroke="#e6c98a" stroke-width="1.2"/>
 <path d="M19 25c3-2 6 2 10 0M19 28c3-2 6 2 10 0M19 31c3-2 6 2 10 0" fill="none" stroke="#aaa" stroke-width="0.9"/>
 <path d="M37 24h6v8h-6z" fill="#bbb"/>
 <rect x="50" y="22" width="1" height="12" fill="#ddd"/>
 <path d="M56 26h8l-4 4z" fill="#e06060"/><path d="M72 30h8l-4-4z" fill="#e08080"/>
 <path d="M86.5 25.5h7v5h-7M91 28.5h4" fill="none" stroke="#e06060" stroke-width="1.2"/>
 <path d="M101 28l4-4 4 4-4 4z" fill="#e09090"/>
</svg>
<!-- tree box -->
<div class="a" style="left:1px;top:178px;width:188px;height:491px;border:1px solid #dcdcdc;background:#fff"></div>
<svg class="a" style="left:0;top:178px" width="110" height="135">
 <g fill="none" stroke="#a8a8a8" stroke-width="1">
  <path d="M14 7.5h7M24.5 11v4M24.5 22v37.5M27.5 18.5h4M27.5 63.5h4"/>
  <path d="M36.5 23v29M36.5 29.5h8M36.5 40.5h8M36.5 51.5h8"/>
  <path d="M36.5 68v2.5M36.5 77.5v52M36.5 129.5h9M40 74.5h4"/>
  <path d="M49.5 79v40M49.5 85.5h8M49.5 96.5h8M49.5 107.5h8M49.5 118.5h8"/>
 </g>
 <g fill="#fff" stroke="#9a9a9a" stroke-width="0.8"><rect x="7" y="4" width="7" height="7"/><rect x="21" y="15" width="7" height="7"/><rect x="21" y="60" width="7" height="7"/><rect x="33" y="71" width="7" height="7"/></g>
 <path d="M8.5 7.5h4M22.5 18.5h4M22.5 63.5h4M34.5 74.5h4" stroke="#555" stroke-width="0.8"/>
 <path d="M22 3h5M24.5 3v6M22 10.5h5" stroke="#5a7aaa" stroke-width="1"/>
 <rect x="32.5" y="14" width="7.5" height="9.5" rx="1.5" fill="#eef0f4" stroke="#aab" stroke-width="0.7"/>
 <path d="M45 26h4l1 1.5h5v6h-10z" fill="#e8cc8a"/>
 <path d="M46.5 36v8M44.5 36h4" stroke="#c9a060" stroke-width="1"/><circle cx="52" cy="45" r="1.6" fill="none" stroke="#c9a060" stroke-width="0.8"/>
 <path d="M45 49l4-2 4 2v5l-4 2-4-2z" fill="#e08868"/>
 <g fill="#8fb0dc"><rect x="32" y="59.5" width="3" height="3"/><rect x="37" y="59.5" width="3" height="3"/><rect x="32" y="64.5" width="3" height="3"/><rect x="37" y="64.5" width="3" height="3"/></g>
 <path d="M44 70h4l1 1.5h3v6h-8z" fill="#e8d7a8"/><path d="M49 75l2 2.5 4-5" fill="none" stroke="#2d5a9a" stroke-width="1.2"/>
 <path d="M58 82h10M58 85h10M60 88h8" stroke="#bbb" stroke-width="1"/>
 <path d="M63 92v8" stroke="#c9a060" stroke-width="1.5"/><path d="M60 92h6" stroke="#999" stroke-width="1"/>
 <circle cx="63" cy="107" r="4.5" fill="#8fb4de"/>
 <path d="M58 116c3-2 6 2 10 0M58 119c3-2 6 2 10 0M58 122c3-2 6 2 10 0" fill="none" stroke="#aaa" stroke-width="0.9"/>
 <path d="M47 126.5l6 3-6 3z" fill="#e8795a"/>
</svg>
<div class="t" style="left:32px;top:181px;color:#222">机床群组-1</div>
<div class="t" style="left:45px;top:192px;color:#222">属性 - 3 - AXIS VM</div>
<div class="t" style="left:58px;top:203px;color:#222">文件</div>
<div class="t" style="left:58px;top:214px;color:#222">刀具设置</div>
<div class="t" style="left:58px;top:225px;color:#222">毛坯设置</div>
<div class="t" style="left:45px;top:236px;color:#222">刀具群组-1</div>
<div class="t" style="left:60px;top:247px;color:#222">1 - 螺纹铣削 -</div>
<div class="t" style="left:72px;top:258px;color:#222">参数</div>
<div class="t" style="left:72px;top:269px;color:#222">#1 - M10.0</div>
<div class="t" style="left:72px;top:280px;color:#222">图形: (2) -</div>
<div class="t" style="left:72px;top:291px;color:#222">刀路 - 17.</div>
<!-- h scrollbar -->
<div class="a" style="left:2px;top:657px;width:186px;height:12px;background:#fff;border-top:1px solid #e6e6e6"></div>
<div class="a" style="left:145px;top:658px;width:31px;height:11px;background:#ececec"></div>
<div class="a" style="left:14px;top:658px;width:1px;height:11px;background:#e0e0e0"></div>
<div class="a" style="left:176px;top:658px;width:1px;height:11px;background:#e0e0e0"></div>
<svg class="a" style="left:6px;top:660px" width="6" height="7"><path d="M4.5 0.5v6l-3.5-3z" fill="#666"/></svg>
<svg class="a" style="left:180px;top:660px" width="6" height="7"><path d="M1 0.5v6l3.5-3z" fill="#666"/></svg>
<!-- bottom tabs -->
<div class="a" style="left:0;top:685px;width:192px;height:1px;background:#e4e4e4"></div>
<div class="a" style="left:0;top:685px;width:25px;height:17px;background:#fff;border-right:1px solid #d0d0d0;border-left:1px solid #d0d0d0"></div>
<div class="a" style="left:0;top:700px;width:25px;height:2px;background:#9ab8e8"></div>
<div class="t" style="left:4px;top:688px;color:#333">刀路</div>
<div class="t" style="left:30px;top:688px;color:#444">实体</div>
<div class="t" style="left:56px;top:688px;color:#444">平面</div>
<div class="t" style="left:81px;top:688px;color:#444">层别</div>
<div class="t" style="left:107px;top:688px;color:#444">最近使用功能</div>


<div class="dlg">
<!-- DIALOG -->
<div class="a" style="left:107px;top:115px;width:607px;height:487px;box-shadow:0 1px 5px rgba(0,0,0,0.3)"></div>
<div class="a" style="left:107px;top:115px;width:607px;height:487px;background:#f0f0f0;border:1px solid #8e8e8e"></div>
<div class="a" style="left:108px;top:116px;width:605px;height:21px;background:#fff;border-bottom:1px solid #d6d6d6"></div>
<svg class="a" style="left:112px;top:120px" width="14" height="12"><rect x="1" y="1" width="11" height="9.5" fill="#e4e4e4" stroke="#c6c6c6" stroke-width="0.8"/><rect x="3" y="3" width="3" height="5.5" fill="#6a7a6a"/><rect x="7" y="3" width="3.5" height="5.5" fill="#d8d8d8"/></svg>
<div class="t" style="left:127.5px;top:121px;color:#222;font-size:8.7px;letter-spacing:0">2D 刀路 - 螺纹铣削</div>
<svg class="a" style="left:699px;top:121px" width="10" height="10"><path d="M1.2 1.2l7.6 7.6M8.8 1.2l-7.6 7.6" stroke="#222" stroke-width="1.1"/></svg>
<!-- dialog toolbar -->
<div class="a" style="left:108px;top:165px;width:605px;height:1px;background:#a8a8a8"></div>
<svg class="a" style="left:110px;top:139px" width="130" height="24">
 <path d="M9 3h8l-1 8h-6z" fill="#222"/><rect x="10" y="4" width="2" height="6" fill="#888"/><path d="M11 11h4v3h-4z" fill="#333"/><path d="M11.5 14h3l-0.5 6h-2z" fill="#e6b020"/>
 <rect x="25.5" y="3" width="1" height="18" fill="#c8c8c8"/>
 <path d="M32 3.5h13l2 2v14h-15z" fill="#6a5cc0"/><rect x="35" y="4" width="8" height="6" fill="#ddd"/><rect x="36" y="14" width="7" height="5.5" fill="#f0f0f0"/><rect x="37" y="15.5" width="2" height="3" fill="#6a5cc0"/>
 <rect x="54" y="4" width="16" height="15" fill="#1a1a1a"/><path d="M57 5h11v4h-3v9h-5v-9h-3z" fill="#3ab03a"/><path d="M60 9v9" stroke="#b8f0b8" stroke-width="1"/>
 <rect x="73.5" y="3" width="1" height="18" fill="#c8c8c8"/>
 <rect x="81" y="4" width="10" height="10" fill="#c8d8ec" stroke="#8a9ab0" stroke-width="0.7"/><rect x="83" y="6" width="4" height="5" fill="#4a6aa8"/><circle cx="92" cy="14" r="3.6" fill="none" stroke="#222" stroke-width="1.3"/><path d="M89.5 16.5l-4 4" stroke="#222" stroke-width="1.8"/>
 <rect x="104" y="8" width="14" height="10" fill="#ddd" stroke="#b0b0b0" stroke-width="0.8"/><path d="M104 10.5h14" stroke="#b0b0b0" stroke-width="0.8"/><path d="M113.5 5l4 4M117.5 5l-4 4" stroke="#e04870" stroke-width="1.8"/>
</svg>
<!-- tree box -->
<div class="a" style="left:112px;top:174px;width:120px;height:215px;background:#fff;border:1px solid #9a9a9a"></div>
<div class="a" style="left:220px;top:175px;width:11px;height:213px;background:#f0f0f0"></div>
<div class="a" style="left:221px;top:188px;width:9px;height:155px;background:#cdcdcd"></div>
<svg class="a" style="left:221px;top:177px" width="9" height="8"><path d="M1.5 5.5l3-3 3 3" fill="none" stroke="#555" stroke-width="1"/></svg>
<svg class="a" style="left:221px;top:378px" width="9" height="8"><path d="M1.5 2.5l3 3 3-3" fill="none" stroke="#555" stroke-width="1"/></svg>
<svg class="a" style="left:112px;top:175px" width="60" height="212">
 <g stroke="#c4c4c4" stroke-width="1" fill="none"><path d="M8.5 7v206M8.5 7.5h20M8.5 18.5h20M8.5 29.5h20M8.5 40.5h20M8.5 51.5h20M8.5 117.5h20M8.5 161.5h20M8.5 172.5h20M8.5 183.5h20M8.5 194.5h20M8.5 205.5h20M12 62.5h16.5M12 95.5h16.5M12 128.5h16.5M22 73.5h19M22 84.5h19M22 106.5h19M22 139.5h19M22 150.5h19M22 66V84.5M22 99V106.5M22 132V150.5"/></g>
 <g fill="#fff" stroke="#a0a0a0" stroke-width="0.8"><rect x="5.5" y="59.5" width="6" height="6"/><rect x="5.5" y="92.5" width="6" height="6"/><rect x="5.5" y="125.5" width="6" height="6"/></g>
 <path d="M6.5 62.5h4M6.5 95.5h4M6.5 128.5h4" stroke="#444" stroke-width="0.8"/>
 <path d="M19.5 62l2 2.5 3.5-4.5" fill="none" stroke="#5aa05a" stroke-width="0.9"/>
</svg>
<div class="a" style="left:141px;top:187px;width:20px;height:11px;background:#2f7ad6"></div>
<div class="t" style="left:142px;top:177px;color:#111">刀路类型</div>
<div class="t" style="left:142px;top:188px;color:#fff">刀具</div>
<div class="t" style="left:142px;top:199px;color:#111">刀柄</div>
<div class="t" style="left:142px;top:221px;color:#111">毛坯</div>
<div class="t" style="left:142px;top:232px;color:#111">切削参数</div>
<div class="t" style="left:156px;top:243px;color:#111">进/退刀设置</div>
<div class="t" style="left:156px;top:254px;color:#111">径向分层切削</div>
<div class="t" style="left:142px;top:265px;color:#111">刀轴控制</div>
<div class="t" style="left:156px;top:276px;color:#111">限制</div>
<div class="t" style="left:142px;top:287px;color:#111">孔分段</div>
<div class="t" style="left:142px;top:298px;color:#111">共同参数</div>
<div class="t" style="left:156px;top:309px;color:#111">原点/参考点</div>
<div class="t" style="left:156px;top:320px;color:#111">安全区域</div>
<div class="t" style="left:142px;top:342px;color:#111">圆弧过滤/公差</div>
<div class="t" style="left:142px;top:353px;color:#111">平面</div>
<div class="t" style="left:142px;top:364px;color:#111">冷却液</div>
<div class="t" style="left:142px;top:375px;color:#111">插入指令</div>
<!-- quick view -->
<div class="t" style="left:112px;top:397px;color:#111">快速查看设置</div>
<div class="a" style="left:111px;top:408px;width:121px;height:146px;background:#fff;border:1px solid #9a9a9a"></div>
<div class="t" style="left:117px;top:412px;color:#111">刀具</div><div class="t" style="left:172px;top:412px;color:#111">10螺纹铣刀</div>
<div class="t" style="left:117px;top:423.5px;color:#111">刀具直径</div><div class="t" style="left:172px;top:423.5px;color:#111">10</div>
<div class="t" style="left:117px;top:435px;color:#111">圆角半径</div><div class="t" style="left:172px;top:435px;color:#111">0</div>
<div class="t" style="left:117px;top:447px;color:#111">进给速率</div><div class="t" style="left:172px;top:447px;color:#111">1000</div>
<div class="t" style="left:117px;top:458px;color:#111">主轴转速</div><div class="t" style="left:172px;top:458px;color:#111">3000</div>
<div class="t" style="left:117px;top:470px;color:#111">冷却液</div><div class="t" style="left:172px;top:470px;color:#111">关</div>
<div class="t" style="left:117px;top:481px;color:#111">刀具长度</div><div class="t" style="left:172px;top:481px;color:#111">60</div>
<div class="t" style="left:117px;top:493px;color:#111">刀长补正</div><div class="t" style="left:172px;top:493px;color:#111">1</div>
<div class="t" style="left:117px;top:505px;color:#111">半径补正</div><div class="t" style="left:172px;top:505px;color:#111">1</div>
<div class="t" style="left:117px;top:517px;color:#111">绘图/刀具...</div><div class="t" style="left:172px;top:517px;color:#111">俯视图</div>
<div class="t" style="left:117px;top:529px;color:#111">轴组合</div><div class="t" style="left:172px;top:529px;color:#111">Default (1)</div>
<!-- legend -->
<svg class="a" style="left:113px;top:566px" width="10" height="26"><path d="M2 5l2 2 4-5" fill="none" stroke="#4aa04a" stroke-width="1"/><circle cx="4.5" cy="20" r="3.2" fill="none" stroke="#e03030" stroke-width="1"/><path d="M2.3 22.2l4.4-4.4" stroke="#e03030" stroke-width="1"/></svg>
<div class="t" style="left:127px;top:566px;color:#111">=编辑</div>
<div class="t" style="left:127px;top:581px;color:#111">=无效</div>
<!-- right panel frame -->
<div class="a" style="left:237px;top:175px;width:1px;height:395px;background:#a0a0a0"></div>
<div class="a" style="left:238px;top:175px;width:1px;height:395px;background:#fff"></div>
<div class="a" style="left:237px;top:174.5px;width:471px;height:1.5px;background:#a0a0a0"></div>
<!-- tool list -->
<div class="a" style="left:246px;top:195px;width:218px;height:182px;background:#fff;border:1px solid #a0a0a0"></div>
<div class="a" style="left:264px;top:197px;width:1px;height:14px;background:#e6e6e6"></div>
<div class="a" style="left:298px;top:197px;width:1px;height:14px;background:#e6e6e6"></div>
<div class="a" style="left:346px;top:197px;width:1px;height:14px;background:#e6e6e6"></div>
<div class="a" style="left:402px;top:197px;width:1px;height:14px;background:#e6e6e6"></div>
<div class="a" style="left:457px;top:197px;width:1px;height:14px;background:#e6e6e6"></div>
<div class="t" style="left:267px;top:200px;color:#111">状态</div>
<div class="t" style="left:302px;top:200px;color:#111">刀号</div>
<div class="t" style="left:349px;top:200px;color:#111">装配名称</div>
<div class="t" style="left:405px;top:200px;color:#111">刀具名称</div>
<div class="a" style="left:247px;top:213px;width:216px;height:11px;background:#ebebeb"></div>
<svg class="a" style="left:247px;top:213px" width="30" height="11"><rect x="1.5" y="2" width="7" height="8" fill="#8aaecb"/><path d="M3.5 2v8M6 2v8" stroke="#5a7e9e" stroke-width="1"/><rect x="16" y="1" width="11" height="10" fill="#cfe0f0"/><path d="M18 6l2.5 2.5 5-6" fill="none" stroke="#2a5aa0" stroke-width="1.3"/></svg>
<div class="t" style="left:307px;top:213px;color:#111">1</div>
<div class="t" style="left:355px;top:213px;color:#111">--</div>
<div class="t" style="left:407px;top:213px;color:#111">10螺纹铣刀</div>
<svg class="a" style="left:313px;top:217px" width="12" height="15"><path d="M1 1v11l2.8-2.6 2 4.5 1.8-.8-2-4.4h3.8z" fill="#fff" stroke="#222" stroke-width="0.8"/></svg>
<!-- list h scroll -->
<div class="a" style="left:247px;top:365px;width:216px;height:11px;background:#f0f0f0"></div>
<div class="a" style="left:259px;top:365px;width:81px;height:11px;background:#cdcdcd"></div>
<svg class="a" style="left:249px;top:366px" width="8" height="9"><path d="M5.5 1.5l-3 3 3 3" fill="none" stroke="#555" stroke-width="1"/></svg>
<svg class="a" style="left:452px;top:366px" width="8" height="9"><path d="M2.5 1.5l3 3-3 3" fill="none" stroke="#555" stroke-width="1"/></svg>
<div class="t" style="left:364px;top:382px;color:#111">按鼠标右键=编辑/定义刀具</div>
<!-- buttons -->
<div class="a" style="left:246.5px;top:400.5px;width:67px;height:18px;background:#e1e1e1;border:1px solid #adadad"></div>
<div class="t" style="left:252px;top:404px;color:#111">选择刀库刀具...</div>
<div class="a" style="left:341.5px;top:404.5px;width:9px;height:9px;background:#fff;border:1px solid #333"></div>
<div class="t" style="left:352px;top:404px;color:#111">启用刀具过滤</div>
<div class="a" style="left:407.5px;top:400.5px;width:54px;height:18px;background:#e1e1e1;border:1px solid #adadad"></div>
<div class="t" style="left:410px;top:404px;color:#111">刀具过滤(F)...</div>
<div class="a" style="left:245.5px;top:488.5px;width:9px;height:9px;background:#fff;border:1px solid #333"></div>
<div class="t" style="left:256px;top:488px;color:#111">批处理模式</div>
<!-- tool params -->
<div class="t" style="left:488px;top:186px;color:#111">刀具直径<span style="margin-left:1.3px">:</span></div>
<div class="a inp" style="left:531px;top:183px;width:42px;height:16px"><span>10.0</span></div>
<div class="t" style="left:488px;top:206px;color:#111">圆角半径<span style="margin-left:1.3px">:</span></div>
<div class="a inp" style="left:531px;top:204px;width:42px;height:15px"><span>0.0</span></div>
<div class="a" style="left:476px;top:223px;width:205px;height:1px;background:#b4b4b4"></div>
<div class="a" style="left:476px;top:224px;width:205px;height:1px;background:#fff"></div>
<div class="t" style="left:488px;top:231px;color:#111">刀具名称<span style="margin-left:1.3px">:</span></div>
<div class="a inp" style="left:531px;top:228.5px;width:150px;height:15.5px;background:#fff;letter-spacing:0;font-size:8.6px"><span>10螺纹铣刀</span></div>
<div class="t" style="left:504px;top:252px;color:#111">刀号<span style="margin-left:1.3px">:</span></div>
<div class="a inp" style="left:531px;top:249.5px;width:42px;height:15px"><span>1</span></div>
<div class="t" style="left:596px;top:252px;color:#111">刀长补正<span style="margin-left:1.3px">:</span></div>
<div class="a inp" style="left:639.5px;top:249.5px;width:41px;height:15px"><span>1</span></div>
<div class="t" style="left:488px;top:272px;color:#111">刀座编号<span style="margin-left:1.3px">:</span></div>
<div class="a inp" style="left:531px;top:269.5px;width:42px;height:15px"><span>0</span></div>
<div class="t" style="left:596px;top:272px;color:#111">直径补正<span style="margin-left:1.3px">:</span></div>
<div class="a inp" style="left:639.5px;top:269.5px;width:41px;height:15px"><span>1</span></div>
<div class="a" style="left:471px;top:290px;width:210px;height:1px;background:#b4b4b4"></div>
<div class="a" style="left:471px;top:291px;width:210px;height:1px;background:#fff"></div>
<div class="t" style="left:596px;top:336px;color:#111">主轴方向<span style="margin-left:1.3px">:</span></div>
<div class="a" style="left:639.5px;top:334px;width:41px;height:13.5px;background:#e5e5e5;border:1px solid #c0c0c0"></div>
<div class="t" style="left:642px;top:336px;color:#111">顺时针</div>
<svg class="a" style="left:670px;top:338px" width="7" height="5"><path d="M1 1l2.5 2.5 2.5-2.5" fill="none" stroke="#555" stroke-width="0.9"/></svg>
<div class="t" style="left:488px;top:355px;color:#111">进给速率<span style="margin-left:1.3px">:</span></div>
<div class="a inp" style="left:531px;top:352px;width:41px;height:15.5px"><span>1000.0</span></div>
<div class="t" style="left:596px;top:355px;color:#111">主轴转速<span style="margin-left:1.3px">:</span></div>
<div class="a inp" style="left:639.5px;top:352px;width:41px;height:15.5px"><span>3000</span></div>
<div class="t" style="left:480px;top:375px;color:#111">每齿进刀量<span style="margin-left:1.3px">:</span></div>
<div class="a inp" style="left:531px;top:372px;width:41px;height:15.5px"><span>0.0833</span></div>
<div class="t" style="left:603px;top:375px;color:#111">线速度<span style="margin-left:1.3px">:</span></div>
<div class="a inp" style="left:639.5px;top:372px;width:41px;height:15.5px"><span>94.2507</span></div>
<div class="t" style="left:488px;top:395px;color:#111">下刀速率<span style="margin-left:1.3px">:</span></div>
<div class="a inp" style="left:531px;top:392px;width:41px;height:15.5px"><span>600.0</span></div>
<div class="t" style="left:596px;top:395px;color:#111">提刀速率<span style="margin-left:1.3px">:</span></div>
<div class="a inp" style="left:639.5px;top:392px;width:41px;height:15.5px;background:#f0f0f0;border-color:#d0d0d0"><span style="color:#a8a8a8">1200.0</span></div>
<div class="a" style="left:491px;top:412.5px;width:9.5px;height:9.5px;background:#fff;border:1px solid #333"></div>
<div class="t" style="left:502px;top:412px;color:#111">强制换刀</div>
<div class="a" style="left:599px;top:412.5px;width:9.5px;height:9.5px;background:#fff;border:1px solid #333"></div>
<svg class="a" style="left:599px;top:412.5px" width="10" height="10"><path d="M2 5l2 2.2 4-5" fill="none" stroke="#222" stroke-width="1"/></svg>
<div class="t" style="left:610px;top:412px;color:#111">快速提刀</div>
<div class="a" style="left:472px;top:429.5px;width:209px;height:1px;background:#b4b4b4"></div>
<div class="a" style="left:472px;top:430.5px;width:209px;height:1px;background:#fff"></div>
<div class="t" style="left:473px;top:434px;color:#111">说明</div>
<div class="a" style="left:473px;top:446px;width:208px;height:41px;background:#fff;border:1px solid #a0a0a0"></div>
<svg class="a" style="left:669px;top:448px" width="10" height="38"><path d="M2 5l3-3 3 3M2 33l3 3 3-3" fill="none" stroke="#c0c0c0" stroke-width="0.9"/></svg>
<!-- bottom -->
<div class="a" style="left:448.5px;top:581px;width:8.5px;height:9.5px;background:#fff;border:1px solid #333"></div>
<svg class="a" style="left:448.5px;top:581px" width="10" height="10"><path d="M1.8 5l2 2.2 3.8-5" fill="none" stroke="#222" stroke-width="1"/></svg>
<div class="t" style="left:459px;top:581px;color:#111">生成刀路</div>
<div class="a" style="left:548.5px;top:577.5px;width:36px;height:18.5px;background:#e1e1e1;border:1.5px solid #2a7ad0"></div>
<svg class="a" style="left:556px;top:579px" width="22" height="16"><path d="M3 8l4.5 5 11-11" fill="none" stroke="#3aa03a" stroke-width="2.6"/></svg>
<div class="a" style="left:590px;top:577.5px;width:36px;height:18.5px;background:#e1e1e1;border:1px solid #adadad"></div>
<svg class="a" style="left:600px;top:580px" width="16" height="14"><path d="M2.5 2l11 10M13.5 2l-11 10" stroke="#e04020" stroke-width="3"/></svg>
<div class="a" style="left:631.5px;top:577.5px;width:36px;height:18.5px;background:#e1e1e1;border:1px solid #adadad"></div>
<svg class="a" style="left:640px;top:578px" width="18" height="18"><circle cx="9" cy="9" r="7.8" fill="#1a5fb8"/><circle cx="9" cy="9" r="6.3" fill="none" stroke="#fff" stroke-width="0.6" stroke-opacity="0.5"/><path d="M9 3.5v11M3.5 9h11" stroke="#fff" stroke-width="2.8"/></svg>
<div class="a" style="left:672.5px;top:577.5px;width:35.5px;height:18.5px;background:#e1e1e1;border:1px solid #adadad"></div>
<svg class="a" style="left:683px;top:579px" width="14" height="16"><path d="M3.5 5.5c0-3 2-4 3.8-4s3.8 1 3.8 3.5c0 2.8-3.5 3-3.5 5.5v1" fill="none" stroke="#444" stroke-width="2.4"/><path d="M3.5 5.5c0-3 2-4 3.8-4s3.8 1 3.8 3.5c0 2.8-3.5 3-3.5 5.5v1" fill="none" stroke="#eee" stroke-width="0.9"/><circle cx="7.5" cy="14" r="1.4" fill="#444"/></svg>

</div>
<!-- status bar -->
<div id="status">
<div class="t" style="left:592px;top:706px;position:fixed">截面视图: 关闭</div>
<div class="t" style="left:660px;top:706px;position:fixed">选择的图素: 0</div>
<div class="t" style="left:763px;top:706px;position:fixed">X:</div>
<div class="t" style="left:779px;top:706px;position:fixed">8.55594</div>
<div class="t" style="left:837px;top:706px;position:fixed">Y:</div>
<div class="t" style="left:853px;top:706px;position:fixed">-58.04306</div>
<div class="t" style="left:907px;top:706px;position:fixed">Z:</div>
<div class="t" style="left:921px;top:706px;position:fixed">0.00000</div>
<div class="t" style="left:971px;top:706px;position:fixed">3D</div>
<div class="t" style="left:991px;top:706px;position:fixed">绘图平面: 俯视图</div>
<div class="t" style="left:1070px;top:706px;position:fixed">刀具平面: 俯视图</div>
<div class="t" style="left:1149px;top:706px;position:fixed">WCS: 俯视图</div>
<svg style="position:fixed;left:950px;top:702px" width="380" height="18">
 <g fill="#8aa4c8"><circle cx="10.5" cy="9.5" r="0.8"/><circle cx="112.5" cy="9.5" r="0.8"/><circle cx="192" cy="9.5" r="0.8"/><circle cx="256" cy="9.5" r="0.8"/></g>
 <g fill="none" stroke="#fff" stroke-width="0.9">
  <circle cx="273" cy="9.5" r="5"/><path d="M268 9.5h10M273 4.5v10M269 6.5h8M269 12.5h8"/>
  <circle cx="291.5" cy="9.5" r="5"/><path d="M286.5 9.5h10M291.5 4.5v10"/>
  <circle cx="310.5" cy="9.5" r="5"/><path d="M305.5 9.5h10"/>
 </g>
 <defs><radialGradient id="sph" cx="0.4" cy="0.35" r="0.7"><stop offset="0" stop-color="#fff"/><stop offset="0.6" stop-color="#d8dde4"/><stop offset="1" stop-color="#8a96a8"/></radialGradient></defs>
 <circle cx="330" cy="9.5" r="5.5" fill="url(#sph)"/>
 <circle cx="349" cy="9.5" r="5.5" fill="url(#sph)"/>
 <circle cx="369" cy="9.5" r="5.5" fill="url(#sph)"/><path d="M365 13.5l8-8" stroke="#555" stroke-width="1.5"/>
</svg>
</div>
</body></html>
